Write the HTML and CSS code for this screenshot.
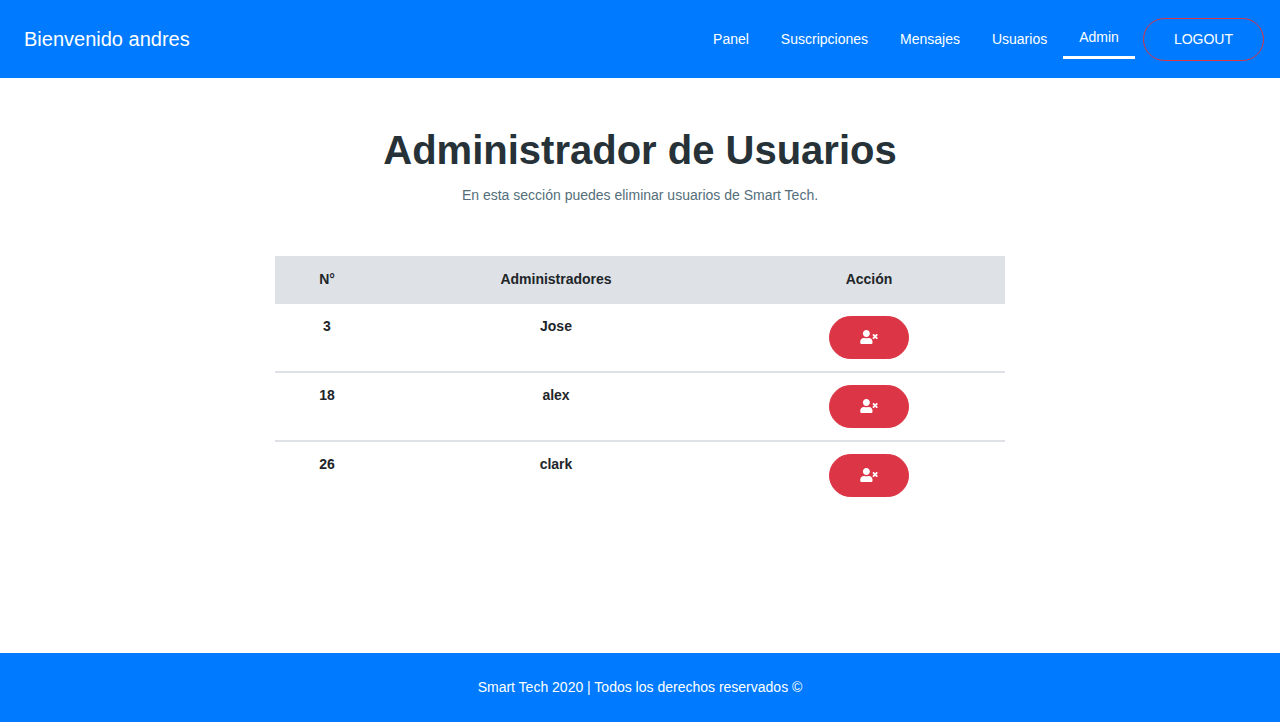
FILE: index.html
```html
<!DOCTYPE html>
<html lang="es">
<head>
<meta charset="utf-8">
<meta name="viewport" content="width=device-width, initial-scale=1">
<title>Administrador de Usuarios</title>
<link rel="stylesheet" href="styles.css">
</head>
<body class="page">
<svg class="sprite" aria-hidden="true">
  <symbol id="user-times" viewBox="0 0 640 512">
    <path fill="currentColor" d="M589.6 240l45.6-45.6c6.3-6.3 6.3-16.5 0-22.8l-22.8-22.8c-6.3-6.3-16.5-6.3-22.8 0L544 194.4l-45.6-45.6c-6.3-6.3-16.5-6.3-22.8 0l-22.8 22.8c-6.3 6.3-6.3 16.5 0 22.8l45.6 45.6-45.6 45.6c-6.3 6.3-6.3 16.5 0 22.8l22.8 22.8c6.3 6.3 16.5 6.3 22.8 0l45.6-45.6 45.6 45.6c6.3 6.3 16.5 6.3 22.8 0l22.8-22.8c6.3-6.3 6.3-16.5 0-22.8L589.6 240zM224 256c70.7 0 128-57.3 128-128S294.7 0 224 0 96 57.3 96 128s57.3 128 128 128zm89.6 32h-16.7c-22.2 10.2-46.9 16-72.9 16s-50.6-5.8-72.9-16h-16.7C60.2 288 0 348.2 0 422.4V464c0 26.5 21.5 48 48 48h352c26.5 0 48-21.5 48-48v-41.6c0-74.2-60.2-134.4-134.4-134.4z"/>
  </symbol>
</svg>
<header class="navbar">
  <a class="brand" href="#">Bienvenido andres</a>
  <nav class="menu">
    <a class="menu-link" href="#">Panel</a>
    <a class="menu-link" href="#">Suscripciones</a>
    <a class="menu-link" href="#">Mensajes</a>
    <a class="menu-link" href="#">Usuarios</a>
    <a class="menu-link active" href="#" aria-current="page">Admin</a>
    <button class="btn btn-outline" type="button">LOGOUT</button>
  </nav>
</header>
<main class="content">
  <h1 class="title">Administrador de Usuarios</h1>
  <p class="subtitle">En esta sección puedes eliminar usuarios de Smart Tech.</p>
  <table class="users">
    <thead>
      <tr><th class="col-number" scope="col">N°</th><th class="col-name" scope="col">Administradores</th><th scope="col">Acción</th></tr>
    </thead>
    <tbody>
      <tr><th scope="row">3</th><td>Jose</td><td><button class="btn btn-danger" type="button" aria-label="Eliminar a Jose"><svg class="icon" aria-hidden="true"><use href="#user-times"/></svg></button></td></tr>
      <tr><th scope="row">18</th><td>alex</td><td><button class="btn btn-danger" type="button" aria-label="Eliminar a alex"><svg class="icon" aria-hidden="true"><use href="#user-times"/></svg></button></td></tr>
      <tr><th scope="row">26</th><td>clark</td><td><button class="btn btn-danger" type="button" aria-label="Eliminar a clark"><svg class="icon" aria-hidden="true"><use href="#user-times"/></svg></button></td></tr>
    </tbody>
  </table>
</main>
<footer class="footer">Smart Tech 2020 | Todos los derechos reservados ©</footer>
</body>
</html>
```
FILE: styles.css
```css
*, *::before, *::after { box-sizing: border-box; }

.page {
  display: flex;
  flex-direction: column;
  min-height: 100vh;
  margin: 0;
  background: #fff;
  color: #212529;
  font-family: "Liberation Sans", Arial, sans-serif;
  font-size: 14px;
  line-height: 21px;
}

.sprite { display: none; }

.navbar {
  display: flex;
  flex-wrap: wrap;
  align-items: center;
  justify-content: space-between;
  padding: 17px 16px 17px 24px;
  background: #007bff;
}

.brand {
  color: #fff;
  font-size: 20px;
  line-height: 30px;
  text-decoration: none;
}

.menu {
  display: flex;
  flex-wrap: wrap;
  align-items: center;
  min-height: 44px;
}

.menu-link {
  padding: 8px 16px;
  color: #fff;
  text-decoration: none;
}

.menu-link.active { border-bottom: 3px solid #fff; }

.btn {
  padding: 10px 30px;
  border: 1px solid #dc3545;
  border-radius: 25px;
  color: #fff;
  font: inherit;
  cursor: pointer;
}

.btn-outline {
  align-self: flex-end;
  margin-left: 8px;
  background: transparent;
}

.btn-danger {
  display: inline-flex;
  padding: 13px 30px 14px;
  background: #dc3545;
}

.icon {
  width: 18px;
  height: 14px;
}

.content {
  flex: 1;
  width: 100%;
  max-width: 762px;
  margin: 0 auto;
  padding: 48px 16px;
  text-align: center;
}

.title {
  margin: 0 0 11px;
  color: #263238;
  font-size: 40px;
  line-height: 48px;
}

.subtitle {
  margin: 0 0 50px;
  color: #546e7a;
}

.users {
  width: 100%;
  border-collapse: separate;
  border-spacing: 0;
  font-weight: bold;
  table-layout: fixed;
}

.users th,
.users td {
  padding: 12px;
  vertical-align: top;
}

.users thead th {
  padding: 13px 12px 14px;
  background: #dee2e6;
}

.users .btn {
  height: 43px;
  vertical-align: top;
}

.users tbody tr + tr > * { border-top: 2px solid #dee2e6; }

.users .col-number { width: 104px; }

.users .col-name { width: 354px; }

.footer {
  padding: 24px 16px;
  background: #007bff;
  color: #fff;
  text-align: center;
}
```
